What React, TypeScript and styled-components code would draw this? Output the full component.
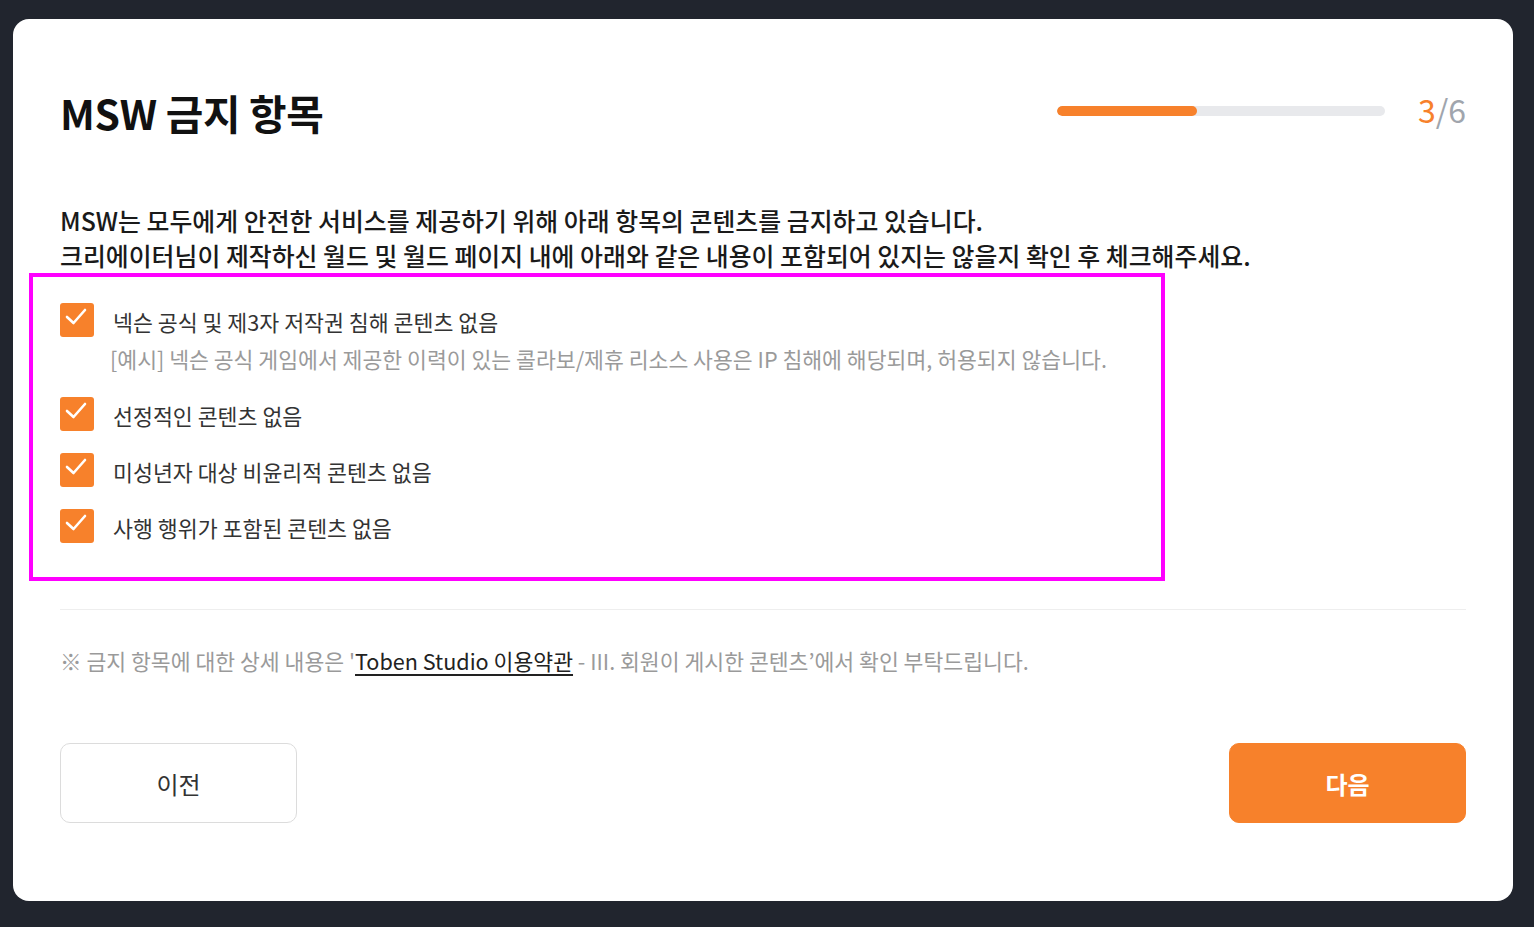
import React from "react";
import styled, { createGlobalStyle } from "styled-components";

const GlobalStyle = createGlobalStyle`
  html, body {
    margin: 0;
    padding: 0;
    background: #21252e;
  }
  body {
    font-family: "Noto Sans CJK KR", "Noto Sans", sans-serif;
    padding: 19px 21px 26px 13px;
  }
`;

const Card = styled.div`
  width: 1500px;
  height: 882px;
  box-sizing: border-box;
  background: #ffffff;
  border-radius: 16px;
  padding: 70px 47px 78px;
  display: flex;
  flex-direction: column;
`;

const Header = styled.div`
  display: flex;
  align-items: center;
  justify-content: space-between;
  height: 46px;
`;

const Title = styled.h1`
  margin: 0;
  font-size: 40.8px;
  font-weight: 700;
  color: #111111;
  letter-spacing: -0.3px;
`;

const Progress = styled.div`
  display: flex;
  align-items: center;
  gap: 33px;
`;

const Track = styled.div`
  width: 328px;
  height: 10px;
  border-radius: 5px;
  background: #e8e9ec;
  overflow: hidden;
  margin-top: -2px;
`;

const Fill = styled.div`
  height: 100%;
  border-radius: 5px;
  background: #f7812b;
`;

const Step = styled.div`
  font-size: 32px;
  color: #a0a5ad;
  line-height: 1;
  margin-top: -6px;
  span {
    color: #f7812b;
  }
`;

const Description = styled.p`
  margin: 68px 0 0;
  font-size: 24.9px;
  line-height: 35px;
  font-weight: 500;
  color: #1a1a1a;
`;

const CheckList = styled.div`
  margin-left: -31px;
  width: 1136px;
  box-sizing: border-box;
  border: 4px solid #ff00ff;
  padding: 26px 0 34px 27px;
  display: flex;
  flex-direction: column;
  gap: 22px;
`;

const Item = styled.div`
  display: flex;
  flex-direction: column;
`;

const Row = styled.label`
  display: flex;
  align-items: center;
  gap: 19px;
  height: 34px;
`;

const Box = styled.span`
  width: 34px;
  height: 34px;
  flex: none;
  border-radius: 3px;
  background: #f7812b;
  display: flex;
  align-items: center;
  justify-content: center;
`;

const ItemText = styled.span`
  font-size: 21.7px;
  color: #333333;
  line-height: 34px;
  margin-top: 3px;
`;

const SubText = styled.div`
  margin: 6px 0 0 50px;
  font-size: 21.6px;
  line-height: 32px;
  color: #9a9a9a;
`;

const Divider = styled.hr`
  margin: 28px 0 0;
  border: none;
  border-top: 1px solid #eeeeee;
`;

const Note = styled.p`
  margin: 36px 0 0;
  font-size: 21.6px;
  line-height: 30px;
  color: #9a9a9a;
  a {
    color: #222222;
    text-decoration: underline;
    text-decoration-thickness: 2px;
    text-underline-offset: 4px;
  }
`;

const Buttons = styled.div`
  margin-top: auto;
  display: flex;
  justify-content: space-between;
`;

const Button = styled.button<{ $primary?: boolean }>`
  width: 237px;
  height: 80px;
  border-radius: 10px;
  font-family: inherit;
  font-size: 24px;
  font-weight: ${(p) => (p.$primary ? 700 : 400)};
  color: ${(p) => (p.$primary ? "#ffffff" : "#333333")};
  background: ${(p) => (p.$primary ? "#f7812b" : "#ffffff")};
  border: 1px solid ${(p) => (p.$primary ? "#f7812b" : "#dcdcdc")};
  cursor: pointer;
`;

const Check = () => (
  <svg width="24" height="24" viewBox="0 0 24 24" fill="none" style={{ marginTop: -6, marginLeft: -2 }}>
    <polyline points="3,12 9.5,18 21,5" stroke="#ffffff" strokeWidth="2.6" strokeLinecap="round" strokeLinejoin="round" />
  </svg>
);

const items = [
  {
    label: "넥슨 공식 및 제3자 저작권 침해 콘텐츠 없음",
    sub: "[예시] 넥슨 공식 게임에서 제공한 이력이 있는 콜라보/제휴 리소스 사용은 IP 침해에 해당되며, 허용되지 않습니다.",
  },
  { label: "선정적인 콘텐츠 없음" },
  { label: "미성년자 대상 비윤리적 콘텐츠 없음" },
  { label: "사행 행위가 포함된 콘텐츠 없음" },
];

export default function App() {
  return (
    <>
      <GlobalStyle />
      <Card>
        <Header>
          <Title>MSW 금지 항목</Title>
          <Progress>
            <Track>
              <Fill style={{ width: `${(140 / 328) * 100}%` }} />
            </Track>
            <Step>
              <span>3</span>/6
            </Step>
          </Progress>
        </Header>
        <Description>
          MSW는 모두에게 안전한 서비스를 제공하기 위해 아래 항목의 콘텐츠를 금지하고 있습니다.
          <br />
          크리에이터님이 제작하신 월드 및 월드 페이지 내에 아래와 같은 내용이 포함되어 있지는 않을지 확인 후 체크해주세요.
        </Description>
        <CheckList>
          {items.map((it) => (
            <Item key={it.label}>
              <Row>
                <Box>
                  <Check />
                </Box>
                <ItemText>{it.label}</ItemText>
              </Row>
              {it.sub && <SubText>{it.sub}</SubText>}
            </Item>
          ))}
        </CheckList>
        <Divider />
        <Note>
          ※ 금지 항목에 대한 상세 내용은 '<a href="#">Toben Studio 이용약관</a> - III. 회원이 게시한 콘텐츠’에서 확인 부탁드립니다.
        </Note>
        <Buttons>
          <Button>이전</Button>
          <Button $primary>다음</Button>
        </Buttons>
      </Card>
    </>
  );
}
